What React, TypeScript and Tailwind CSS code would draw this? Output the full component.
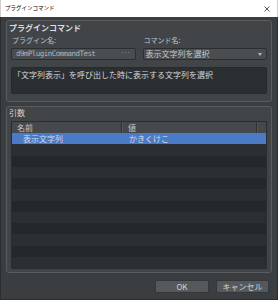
import React from "react";

const rows = Array.from({ length: 12 }, (_, i) => i);

export default function App() {
  return (
    <div
      className="w-[278px] h-[300px] flex flex-col overflow-hidden"
      style={{ fontFamily: '"Noto Sans CJK JP", "Noto Sans", sans-serif' }}
    >
      {/* Title bar */}
      <div className="h-[17px] bg-white flex items-center justify-between pl-[4px] pr-[7px] border-x border-[#d0d0d0]">
        <span className="text-[5.5px] leading-none text-black">プラグインコマンド</span>
        <svg width="6" height="6" viewBox="0 0 6 6" className="mt-[1px]">
          <path d="M0.5 0.5 L5.5 5.5 M5.5 0.5 L0.5 5.5" stroke="#555" strokeWidth="1" />
        </svg>
      </div>

      {/* Body */}
      <div className="flex-1 bg-[#3b3e40] border-x border-b border-[#2b2d2f] pl-[5px] pr-[5px] pt-[3px] flex flex-col">
        {/* Group 1 */}
        <div className="border border-[#5a5d60] rounded-[3px] bg-[#424547] pl-[4px] pr-[4px] pb-[7px]">
          <div className="mt-[1px] h-[12px] leading-[12px] text-[8px] font-bold text-[#dcdee0] -ml-[2px]">
            プラグインコマンド
          </div>
          <div className="mt-[1px] grid grid-cols-2 gap-[7px] h-[11px] leading-[11px] text-[7px] text-[#c3c7ca]">
            <div className="pl-[1px]">プラグイン名:</div>
            <div className="pl-[1px]">コマンド名:</div>
          </div>
          <div className="mt-[2px] grid grid-cols-2 gap-[7px]">
            <div className="h-[12px] bg-[#4a4e51] border border-[#2c2f31] rounded-[2px] flex items-center justify-between pl-[4px] pr-[4px]">
              <span
                className="text-[7.5px] leading-none text-[#aeb5ba] tracking-[-0.55px]"
                style={{ fontFamily: '"DejaVu Sans Mono", monospace' }}
              >
                d9mPluginCommandTest
              </span>
              <span className="text-[6px] leading-none text-[#b8bdc1] -mt-[2px]">···</span>
            </div>
            <div className="h-[12px] bg-[#4a4e51] border border-[#2c2f31] rounded-[2px] flex items-center justify-between pl-[2px] pr-[4px]">
              <span className="text-[8px] leading-none text-[#c3c8cc]">表示文字列を選択</span>
              <svg width="4" height="3" viewBox="0 0 4 3">
                <path d="M0 0 L4 0 L2 3 Z" fill="#b5babe" />
              </svg>
            </div>
          </div>
          <div className="mt-[7px] h-[27px] bg-[#2c2f31] border border-[#27292b] rounded-[2px] pl-[1px] pt-[2px]">
            <span className="text-[8px] leading-[10px] text-[#d4d8db] block">
              「文字列表示」を呼び出した時に表示する文字列を選択
            </span>
          </div>
        </div>

        {/* Group 2 */}
        <div className="mt-[4px] border border-[#5a5d60] rounded-[3px] bg-[#424547] pl-[4px] pr-[4px] pb-[3px]">
          <div className="h-[12px] leading-[12px] text-[8px] text-[#d0d3d6] -ml-[2px]">引数</div>
          <div className="mt-[2px] border border-[#2a2d2f] bg-[#2b2f31]">
            {/* header */}
            <div className="flex h-[11px] bg-[#46494c] text-[8px] leading-[11px] text-[#c4c8cb]">
              <div className="w-[110px] pl-[5px] border-r border-[#2e3133]">名前</div>
              <div className="w-[135px] pl-[5px] border-r border-[#2e3133] border-l border-l-[#55595c]">値</div>
              <div className="flex-1 border-l border-[#55595c]"></div>
            </div>
            {rows.map((i) => (
              <div
                key={i}
                className={
                  "flex h-[11.25px] text-[8px] leading-[11.25px] " +
                  (i === 0
                    ? "bg-[#4b7bc6] text-[#cfdcf0]"
                    : i % 2 === 1
                    ? "bg-[#2b2f31]"
                    : "bg-[#24282a]")
                }
              >
                {i === 0 && (
                  <>
                    <div className="w-[111px] pl-[11px]">表示文字列</div>
                    <div className="pl-[6px]">かきくけこ</div>
                  </>
                )}
              </div>
            ))}
          </div>
        </div>

        {/* Buttons */}
        <div className="mt-[7px] flex justify-end gap-[7px] pr-[3px]">
          <button className="w-[54px] h-[13px] bg-[#55595c] border border-[#35383a] rounded-[2px] text-[8px] leading-none text-[#d2d4d6] flex items-center justify-center">
            OK
          </button>
          <button className="w-[53px] h-[13px] bg-[#55595c] border border-[#35383a] rounded-[2px] text-[8px] leading-none text-[#d2d4d6] flex items-center justify-center">
            キャンセル
          </button>
        </div>
      </div>
    </div>
  );
}
